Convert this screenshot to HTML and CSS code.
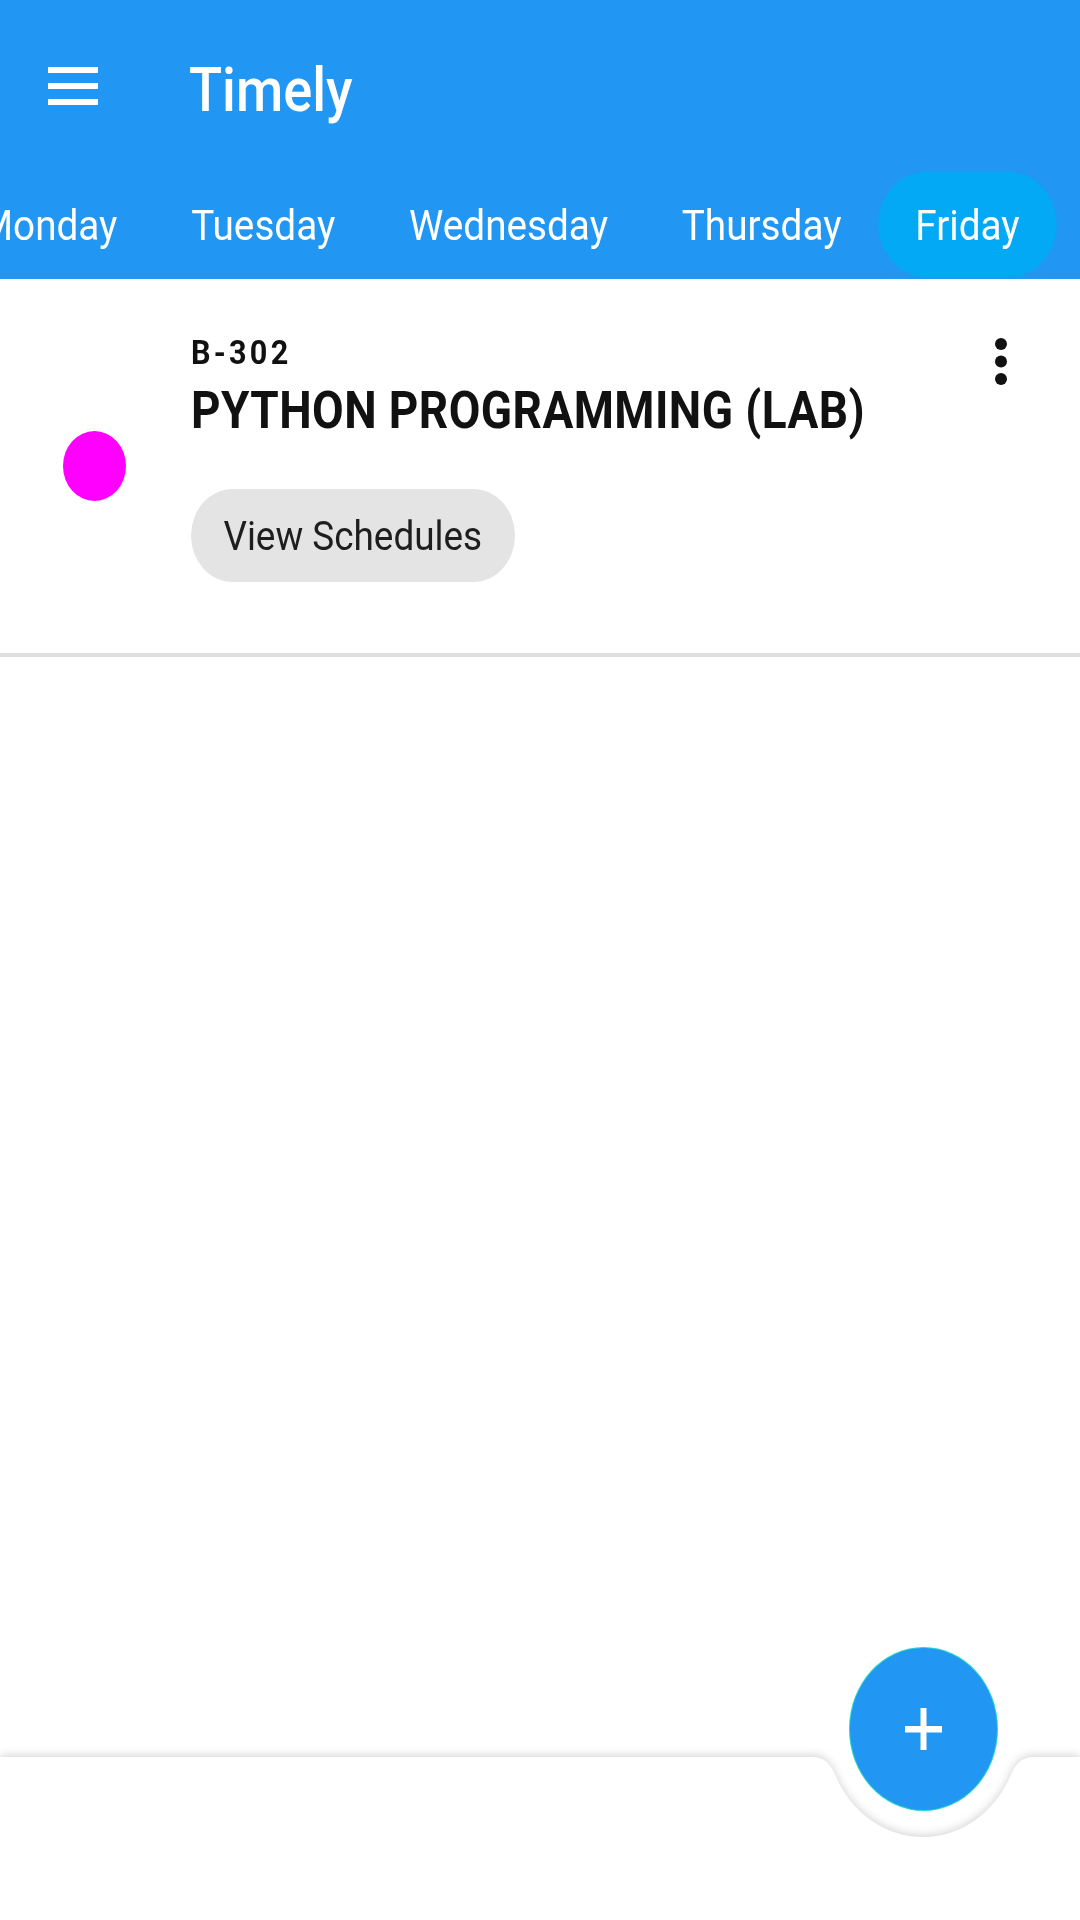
FILE: index.html
```html
<!DOCTYPE html>
<html lang="en">
<head>
<meta charset="utf-8">
<title>Timely</title>
<link rel="stylesheet" href="styles.css">
</head>
<body>
<div class="app">
  <header class="appbar">
    <div class="toolbar">
      <svg class="menu-icon" width="50" height="38" viewBox="0 0 50 38" aria-hidden="true">
        <rect x="0" y="0" width="50" height="6" fill="#fff"/>
        <rect x="0" y="16" width="50" height="6" fill="#fff"/>
        <rect x="0" y="32" width="50" height="6" fill="#fff"/>
      </svg>
      <h1 class="title">Timely</h1>
    </div>
    <nav class="tabs">
      <div class="tabs-track">
        <span class="tab tab-first">Monday</span>
        <span class="tab">Tuesday</span>
        <span class="tab">Wednesday</span>
        <span class="tab">Thursday</span>
        <span class="tab tab-active">Friday</span>
      </div>
    </nav>
  </header>

  <main class="content">
    <article class="subject">
      <span class="dot"></span>
      <div class="subject-body">
        <div class="room">B-302</div>
        <div class="subject-name">PYTHON PROGRAMMING (LAB)</div>
        <button class="chip">View Schedules</button>
      </div>
      <svg class="kebab" width="14" height="48" viewBox="0 0 14 48" aria-hidden="true">
        <circle cx="7" cy="6" r="6" fill="#111"/>
        <circle cx="7" cy="23.5" r="6" fill="#111"/>
        <circle cx="7" cy="41" r="6" fill="#111"/>
      </svg>
    </article>
  </main>

  <footer class="bottombar">
    <svg class="bar-shape" width="1080" height="175" viewBox="0 0 1080 175" aria-hidden="true">
      <path d="M0,12 H812 C824,12 830,18 835.2,30 A97 108 0 0 0 1010.8,30 C1016,18 1022,12 1034,12 H1080 V175 H0 Z" fill="#fff"/>
    </svg>
    <button class="fab" aria-label="Add">
      <svg width="37" height="42" viewBox="0 0 37 42" aria-hidden="true">
        <rect x="15.5" y="0" width="6" height="42" fill="#fff"/>
        <rect x="0" y="18" width="37" height="6.5" fill="#fff"/>
      </svg>
    </button>
  </footer>
</div>
</body>
</html>
```

FILE: styles.css
```css
* { box-sizing: border-box; }

html, body {
  margin: 0;
  padding: 0;
  background: #ffffff;
}

body {
  font-family: Roboto, "Noto Sans", "Liberation Sans", sans-serif;
  color: #111111;
}

.app {
  width: 1080px;
  height: 1920px;
  display: flex;
  flex-direction: column;
  overflow: hidden;
}

/* ---------- App bar ---------- */
.appbar {
  background: #2196f3;
  height: 279px;
  flex: none;
  overflow: hidden;
}

.toolbar {
  height: 172px;
  padding-top: 6px;
  display: flex;
  align-items: center;
  padding-left: 48px;
}

.menu-icon {
  flex: none;
  margin-bottom: 6px;
}

.title {
  margin: 0 0 0 91px;
  font-size: 62px;
  font-weight: 500;
  color: #ffffff;
  display: inline-block;
  transform: scaleX(0.875);
  transform-origin: 0 50%;
  line-height: normal;
}

.tabs {
  height: 105px;
}

.tabs-track {
  width: 1200px;
  height: 105px;
  display: flex;
  transform: scaleX(0.9);
  transform-origin: 0 0;
}

.tab {
  height: 105px;
  display: flex;
  align-items: center;
  padding: 0 41px;
  font-size: 43px;
  color: #ffffff;
  white-space: nowrap;
  border-radius: 53px;
}

.tab-first {
  margin-left: -64px;
}

.tab-active {
  background: #03a9f4;
}

/* ---------- Content ---------- */
.content {
  flex: 1;
}

.subject {
  display: flex;
  align-items: flex-start;
  border-bottom: 4px solid #dfdfdf;
}

.dot {
  flex: none;
  align-self: center;
  width: 63px;
  height: 70px;
  border-radius: 50%;
  background: #ff00ff;
  margin-left: 63px;
}

.subject-body {
  flex: 1;
  margin: 53px 0 71px 65px;
  transform: scaleX(0.9);
  transform-origin: 0 0;
}

.room {
  font-size: 34px;
  line-height: 40px;
  font-weight: 700;
  letter-spacing: 3.6px;
  color: #111111;
}

.subject-name {
  margin-top: 9px;
  font-size: 51px;
  line-height: 60px;
  font-weight: 700;
  letter-spacing: 0.5px;
  color: #111111;
  white-space: nowrap;
}

.chip {
  margin-top: 48px;
  height: 93px;
  padding: 0 36px;
  border: none;
  border-radius: 47px;
  background: #e4e4e4;
  font-family: inherit;
  font-size: 41px;
  color: #1e1e1e;
  display: flex;
  align-items: center;
}

.kebab {
  flex: none;
  margin: 59px 72px 0 0;
}

/* ---------- Bottom bar ---------- */
.bottombar {
  position: relative;
  height: 175px;
  flex: none;
}

.bar-shape {
  display: block;
  overflow: visible;
  filter: drop-shadow(0 -2px 4px rgba(0, 0, 0, 0.16));
}

.fab {
  position: absolute;
  left: 849.5px;
  top: -97px;
  width: 147px;
  height: 162px;
  border-radius: 50%;
  border: none;
  padding: 0;
  background: #2196f3;
  box-shadow: 0 0 0 1px #2ad8c6;
  display: flex;
  align-items: center;
  justify-content: center;
}

.fab svg {
  display: block;
}
```
